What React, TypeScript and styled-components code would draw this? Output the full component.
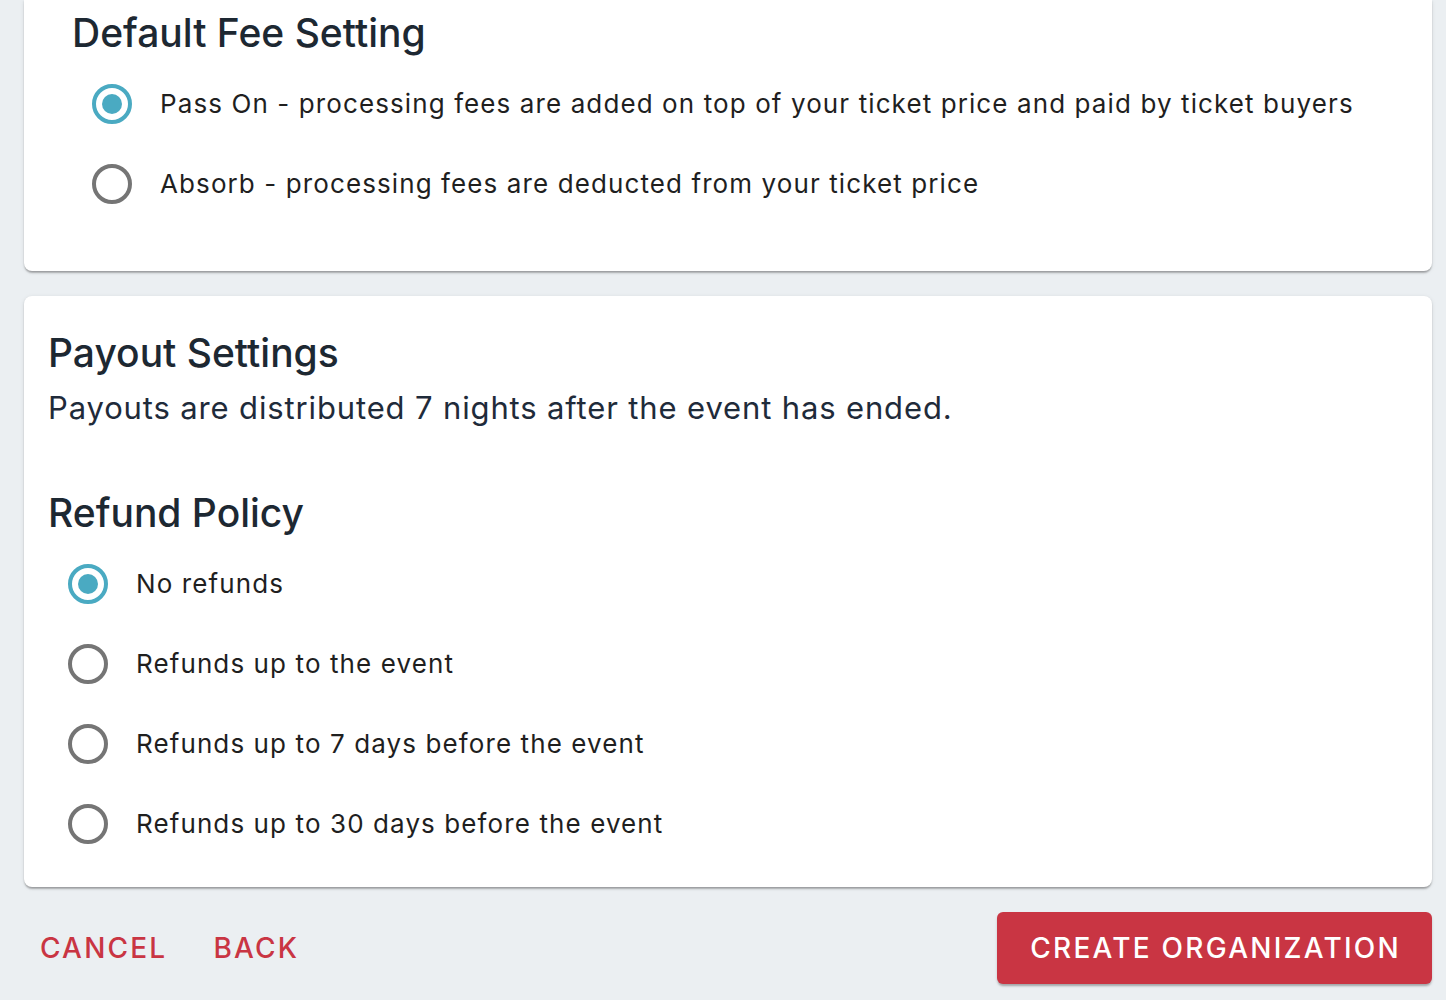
import React, { useState } from "react";
import styled, { createGlobalStyle } from "styled-components";

const Global = createGlobalStyle`
  html, body { margin: 0; padding: 0; background: #ebeff2; }
  body { font-family: Inter, "Noto Sans", "Liberation Sans", sans-serif; -webkit-font-smoothing: antialiased; }
  * { box-sizing: border-box; }
`;

const Page = styled.div`
  width: 1446px;
  height: 1000px;
  overflow: hidden;
  padding: 0 14px 0 24px;
  display: flex;
  flex-direction: column;
  gap: 25px;
`;

const Card = styled.section<{ $top?: boolean; $pad: string }>`
  background: #fff;
  border-radius: ${(p) => (p.$top ? "0 0 8px 8px" : "8px")};
  box-shadow: 0 3px 2px -1px rgba(0, 0, 0, 0.22), 0 1px 2px 0 rgba(0, 0, 0, 0.14),
    0 1px 5px 0 rgba(0, 0, 0, 0.08);
  padding: ${(p) => p.$pad};
  display: flex;
  flex-direction: column;
`;

const Heading = styled.h2`
  margin: 0;
  font-size: 39px;
  line-height: 48px;
  font-weight: 500;
  color: #1d2832;
  letter-spacing: 0;
`;

const Body = styled.p`
  margin: 0;
  font-size: 31px;
  line-height: 40px;
  font-weight: 400;
  color: #1f2b3a;
  letter-spacing: 0.86px;
`;

const RadioList = styled.div<{ $indent: number }>`
  display: flex;
  flex-direction: column;
  margin-top: 7px;
  padding-left: ${(p) => p.$indent}px;
`;

const Row = styled.label`
  height: 80px;
  display: flex;
  align-items: center;
  gap: 28px;
  cursor: pointer;
`;

const Circle = styled.span<{ $on: boolean }>`
  width: 40px;
  height: 40px;
  flex: none;
  border-radius: 50%;
  border: 4px solid ${(p) => (p.$on ? "#4aaac2" : "#757575")};
  display: flex;
  align-items: center;
  justify-content: center;
  &::after {
    content: "";
    width: 20px;
    height: 20px;
    border-radius: 50%;
    background: #4aaac2;
    display: ${(p) => (p.$on ? "block" : "none")};
  }
`;

const Label = styled.span`
  font-size: 26px;
  line-height: 36px;
  color: #1f1f1f;
  letter-spacing: 1.1px;
`;

const Spacer = styled.div<{ $h: number }>`
  height: ${(p) => p.$h}px;
`;

const Actions = styled.div`
  display: flex;
  align-items: center;
  justify-content: space-between;
  height: 72px;
`;

const Left = styled.div`
  display: flex;
  gap: 14px;
`;

const TextButton = styled.button`
  background: none;
  border: none;
  padding: 0 16px;
  height: 72px;
  font-family: inherit;
  font-size: 28px;
  font-weight: 500;
  letter-spacing: 2.2px;
  color: #c93543;
  cursor: pointer;
`;

const Primary = styled.button`
  background: #c93543;
  border: none;
  border-radius: 6px;
  height: 72px;
  padding: 0 31px 0 33px;
  font-family: inherit;
  font-size: 28px;
  font-weight: 500;
  letter-spacing: 2.25px;
  color: #fff;
  box-shadow: 0 3px 2px -1px rgba(0, 0, 0, 0.2), 0 2px 3px 0 rgba(0, 0, 0, 0.14);
  cursor: pointer;
`;

type Opt = { id: string; label: string };

function RadioGroup({ options, indent, initial }: { options: Opt[]; indent: number; initial: string }) {
  const [val, setVal] = useState(initial);
  return (
    <RadioList $indent={indent}>
      {options.map((o) => (
        <Row key={o.id} onClick={() => setVal(o.id)}>
          <Circle $on={val === o.id} />
          <Label>{o.label}</Label>
        </Row>
      ))}
    </RadioList>
  );
}

export default function App() {
  return (
    <>
      <Global />
      <Page>
        <Card $top $pad="9px 24px 47px 48px">
          <Heading>Default Fee Setting</Heading>
          <RadioGroup
            indent={20}
            initial="pass"
            options={[
              { id: "pass", label: "Pass On - processing fees are added on top of your ticket price and paid by ticket buyers" },
              { id: "absorb", label: "Absorb - processing fees are deducted from your ticket price" },
            ]}
          />
        </Card>
        <Card $pad="33px 24px 23px 24px">
          <Heading>Payout Settings</Heading>
          <Spacer $h={11} />
          <Body>Payouts are distributed 7 nights after the event has ended.</Body>
          <Spacer $h={61} />
          <Heading>Refund Policy</Heading>
          <RadioGroup
            indent={20}
            initial="none"
            options={[
              { id: "none", label: "No refunds" },
              { id: "event", label: "Refunds up to the event" },
              { id: "7", label: "Refunds up to 7 days before the event" },
              { id: "30", label: "Refunds up to 30 days before the event" },
            ]}
          />
        </Card>
        <Actions>
          <Left>
            <TextButton>CANCEL</TextButton>
            <TextButton>BACK</TextButton>
          </Left>
          <Primary>CREATE ORGANIZATION</Primary>
        </Actions>
      </Page>
    </>
  );
}
